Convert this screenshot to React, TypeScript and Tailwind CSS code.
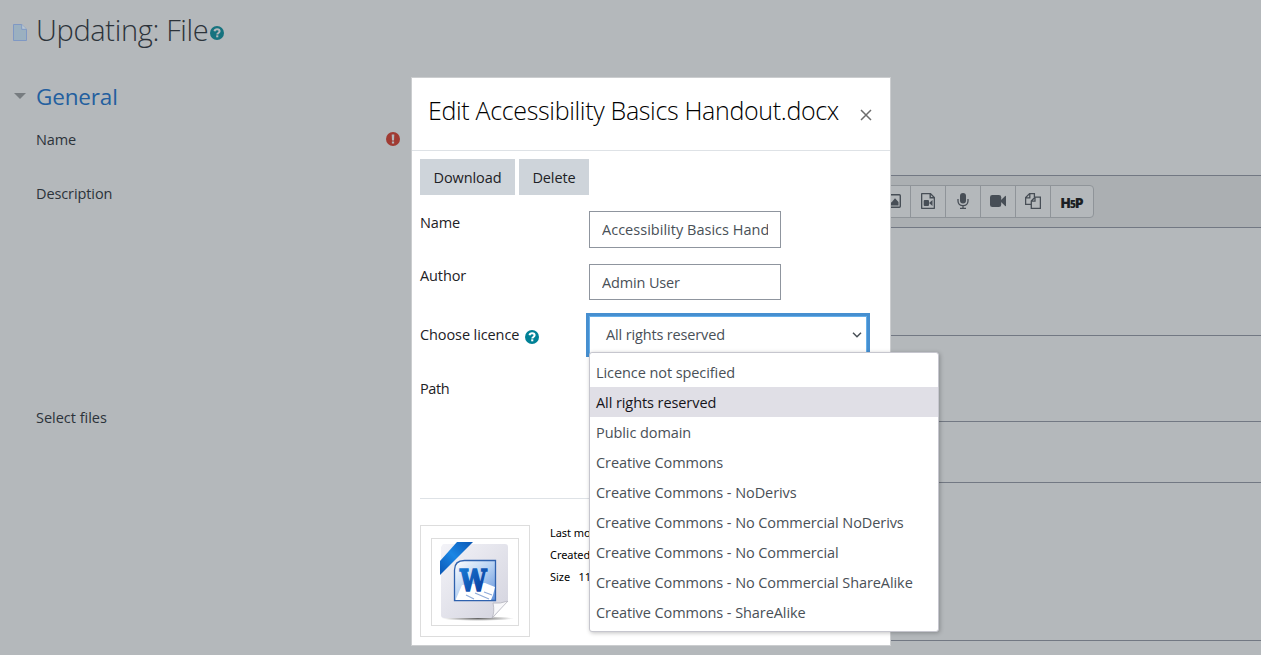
import React, { useState } from 'react';

const LICENCES = [
  'Licence not specified',
  'All rights reserved',
  'Public domain',
  'Creative Commons',
  'Creative Commons - NoDerivs',
  'Creative Commons - No Commercial NoDerivs',
  'Creative Commons - No Commercial',
  'Creative Commons - No Commercial ShareAlike',
  'Creative Commons - ShareAlike',
];

const HelpIcon: React.FC<{ className?: string; mark?: string }> = ({ className, mark = '#fff' }) => (
  <svg viewBox="0 0 14 14" className={className}>
    <circle cx="7" cy="7" r="7" fill="currentColor" />
    <path d="M4.500 5.300C4.800 3.900 5.800 3.300 7.100 3.300c1.400 0 2.500.8 2.500 2 0 1.700-2.300 1.600-2.300 3.200" fill="none" stroke={mark} strokeWidth="2" />
    <rect x="6.200" y="9.300" width="2.100" height="2" fill={mark} />
  </svg>
);

const FileIcon = () => (
  <svg viewBox="0 0 14 17" className="h-[17px] w-[14px]">
    <path d="M.5.5h8.200l4.800 4.800v11.200H.5z" fill="#9bb0c0" stroke="#7f98c4" />
    <path d="M8.700.5v4.800h4.800" fill="#b9c7d2" stroke="#7f98c4" />
  </svg>
);

const ImageIcon = () => (
  <svg viewBox="0 0 16 14" className="h-[14px] w-4" fill="none" stroke="currentColor">
    <rect x=".7" y=".7" width="14.6" height="12.6" rx="1" strokeWidth="1.4" />
    <path d="M2.500 11.500V9.500L5 7l1.500 1.500L10 4.200l3.500 3.800v3.500z" fill="currentColor" stroke="none" />
  </svg>
);

const FileVideoIcon = () => (
  <svg viewBox="0 0 14 16" className="h-4 w-[14px]" fill="none" stroke="currentColor">
    <path d="M.6 1.200q0-.6.6-.6h8.200l4 4v10.200q0 .6-.6.6H1.200q-.6 0-.6-.6zM9.200.6v4.200h4.200" strokeWidth="1.400" />
    <path d="M2.700 8q0-1 1-1h3.300q1 0 1 1v4q0 1-1 1H3.700q-1 0-1-1zM8 10l3.500-3v6z" fill="currentColor" stroke="none" />
  </svg>
);

const MicIcon = () => (
  <svg viewBox="0 0 12 16" className="h-4 w-3" fill="none" stroke="currentColor">
    <rect x="3" y="0" width="6" height="10.5" rx="3" fill="currentColor" stroke="none" />
    <path d="M1 6v2c0 2.800 2.200 4.700 5 4.700s5-1.900 5-4.700V6M6 12.700v2.500M3 15.300h6" strokeWidth="1.300" />
  </svg>
);

const VideoIcon = () => (
  <svg viewBox="0 0 16 12" className="h-3 w-4" fill="currentColor">
    <rect width="11.2" height="12" rx="2.3" />
    <path d="M11 5 15.200.9q.8-.5.8.3v9.600q0 .8-.8.3L11 7z" />
  </svg>
);

const FilesIcon = () => (
  <svg viewBox="0 0 16 16" className="size-4" fill="none" stroke="currentColor" strokeWidth="1.3">
    <path d="M6.200 11.400H.6V4.600l4-4h4.800v3.300M.6 4.800h4.200V.6" />
    <path d="M6.300 8 10 4.200h5.400v11.200H6.300zM6.300 8.200H10v-4" />
  </svg>
);

const WordIcon = () => (
  <svg viewBox="0 0 86 86" className="size-[86px]">
    <defs>
      <linearGradient id="paper" x1="0" y1="0" x2="1" y2="1">
        <stop offset="0" stopColor="#f3f3f8" />
        <stop offset="1" stopColor="#d3d3de" />
      </linearGradient>
      <linearGradient id="ribbon" x1="0" y1="1" x2="1" y2="0">
        <stop offset="0" stopColor="#0a56b4" />
        <stop offset=".5" stopColor="#1a86e4" />
        <stop offset="1" stopColor="#0a56b4" />
      </linearGradient>
      <linearGradient id="tile" x1="0" y1="0" x2="1" y2="1">
        <stop offset="0" stopColor="#ffffff" />
        <stop offset=".5" stopColor="#b8d2f2" />
        <stop offset="1" stopColor="#5f90da" />
      </linearGradient>
      <linearGradient id="letter" x1="0" y1="0" x2="1" y2="1">
        <stop offset="0" stopColor="#1683dc" />
        <stop offset="1" stopColor="#0a2f92" />
      </linearGradient>
      <radialGradient id="shade">
        <stop offset="0" stopColor="#666" />
        <stop offset="1" stopColor="#666" stopOpacity="0" />
      </radialGradient>
    </defs>
    <ellipse cx="46" cy="79.5" rx="36" ry="2.4" fill="url(#shade)" />
    <path d="M11 5h62q3 0 3 3v53L61 79H12q-3 0-3-3V8z" fill="url(#paper)" />
    <path d="M60 79q3-6 1-15 7 1 15-2z" fill="#f8f8fa" stroke="#adadb8" strokeWidth=".7" />
    <path d="M8 22 25 3h16L8 36z" fill="url(#ribbon)" />
    <path d="M22.500 31q0-9.500 10-9.500h31v40h-41z" fill="url(#tile)" stroke="#2f62ae" strokeWidth="1.3" />
    <path d="m30 46 23-2 10 4-2 8-2 5H23.500z" fill="#fff" />
    <path d="m34 56 8 4M43 54l14 6M52 53l8 3" stroke="#8fabd8" strokeWidth="1.2" />
    <text x="28" y="51.500" textLength="26.500" lengthAdjust="spacingAndGlyphs" fill="url(#letter)" stroke="url(#letter)" strokeWidth="1.7" className="font-['DejaVu_Serif',serif] text-[30px] font-bold">W</text>
  </svg>
);

const H5PLogo = () => (
  <span className="flex items-center font-['Open_Sans',sans-serif] text-[14px] font-extrabold leading-none tracking-normal text-[#1b1f23]">
    H<span className="-mx-px mt-0.5 text-[10px]">5</span>P
  </span>
);

const ToolButton: React.FC<{ children: React.ReactNode }> = ({ children }) => (
  <button className="flex w-[35px] items-center justify-center pb-px">{children}</button>
);

const PageBehind = () => (
  <div className="h-full text-[#2c333a]">
    <h1 className="flex h-[62px] items-center pl-[13px] text-[29px] font-light">
      <span className="mt-[3px]"><FileIcon /></span>
      <span className="-mt-0.5 ml-[9px] tracking-[-0.35px]">Updating: File</span>
      <HelpIcon className="ml-0.5 mt-1 size-[14px] text-[#16737f]" mark="#b4b8bb" />
    </h1>
    <div className="flex h-[70px] items-center pl-[14px]">
      <span className="-mt-[3px] border-x-[6px] border-t-[6px] border-x-transparent border-t-[#777c80]" />
      <h3 className="ml-[10px] text-[22.5px] tracking-[-0.15px] text-[#235f9f]">General</h3>
    </div>
    <div className="flex h-[43px] w-[400px] items-start justify-between pl-9">
      <span className="-mt-[3px]">Name</span>
      <svg viewBox="0 0 14 14" className="size-[14px]">
        <circle cx="7" cy="7" r="7" fill="#a03b33" />
        <path d="M5.700 2.500h2.600L8 8.500H6zM5.900 9.500h2.200v2H5.900z" fill="#b4b8bb" />
      </svg>
    </div>
    <div className="flex h-[246px] pl-9">
      <span className="w-[391px] pt-2">Description</span>
      <div className="flex-1">
        <div className="h-[161px] border-y border-[#727883]">
          <div className="flex h-[52px] items-center border-b border-[#727883] bg-[#abafb2] pl-[448px]">
            <div className="flex h-[33px] divide-x divide-[#8f9499] rounded border border-[#8f9499] bg-[#b4b8bb] text-[#474e56]">
              <ToolButton><ImageIcon /></ToolButton>
              <ToolButton><FileVideoIcon /></ToolButton>
              <ToolButton><MicIcon /></ToolButton>
              <ToolButton><VideoIcon /></ToolButton>
              <ToolButton><FilesIcon /></ToolButton>
              <div className="flex w-[42px] items-center justify-center pt-0.5"><H5PLogo /></div>
            </div>
          </div>
        </div>
      </div>
    </div>
    <div className="flex h-[220px] pl-9">
      <span className="-mt-[14px] w-[391px] tracking-[-0.02px]">Select files</span>
      <div className="flex-1 border-y border-[#727883]">
        <div className="h-[61px] border-b border-[#727883]" />
      </div>
    </div>
  </div>
);

export default function App() {
  const [licence, setLicence] = useState('All rights reserved');

  return (
    <div className="relative h-[655px] w-[1261px] overflow-hidden bg-[#b4b8bb] font-['Open_Sans','Noto_Sans',sans-serif] text-[14.5px] leading-[22px] tracking-[-0.1px]">
      <PageBehind />

      <div className="absolute left-[411px] top-[77px] flex h-[569px] w-[480px] flex-col border border-[#cbcdcf] bg-white text-[#1d2125]">
        <div className="flex h-[73px] shrink-0 items-center justify-between border-b border-[#dee2e6] pl-4 pr-[18px]">
          <h2 className="mb-[9px] whitespace-nowrap text-[25px] font-light tracking-[-0.33px] text-black">Edit Accessibility Basics Handout.docx</h2>
          <svg viewBox="0 0 12 12" className="mt-0.5 size-3" stroke="#6c6c6c" strokeWidth="1.5">
            <path d="m1 1 10 10M11 1 1 11" />
          </svg>
        </div>

        <div className="px-2 pt-2">
          <div className="flex gap-1">
            <button className="h-9 w-[95px] bg-[#ced4da] pt-0.5">Download</button>
            <button className="h-9 w-[70px] bg-[#ced4da] pt-0.5">Delete</button>
          </div>
          <div className="mt-4 flex h-[53px] items-start">
            <label className="w-[169px] pt-px">Name</label>
            <input readOnly value="Accessibility Basics Handout.docx" className="h-[37px] w-[192px] border border-[#8f959e] px-3 tracking-[0.02px] text-[#495057]" />
          </div>
          <div className="flex h-[52px] items-start">
            <label className="w-[169px] pt-px">Author</label>
            <input readOnly value="Admin User" className="h-9 w-[192px] border border-[#8f959e] px-3 tracking-[-0.15px] text-[#495057]" />
          </div>
          <div className="flex h-[62px] items-start">
            <label className="flex w-[169px] items-center gap-[6px] pt-2">
              Choose licence
              <HelpIcon className="mt-1 size-[14px] text-[#008196]" />
            </label>
            <div className="flex h-[38px] w-[278px] items-center justify-between border border-[#66afe9] pl-4 pr-1 tracking-[-0.15px] text-[#495057] ring-[3px] ring-[#468fd0]">
              {licence}
              <svg viewBox="0 0 10 6" className="h-[6px] w-[10px]" fill="none" stroke="#495057" strokeWidth="1.5">
                <path d="m1 .8 4 4 4-4" />
              </svg>
            </div>
          </div>
          <div className="flex h-[120px] items-start tracking-[-0.4px]">Path</div>
          <div className="h-[27px] border-t border-[#dee2e6]" />
          <div className="flex text-[11px] text-black">
            <div className="flex h-[112px] w-[110px] items-center justify-center border border-[#dddddd] pt-0.5">
              <div className="flex h-[88px] w-[88px] items-center justify-center border border-[#dddddd]">
                <WordIcon />
              </div>
            </div>
            <div className="-mt-[3px] ml-5 whitespace-nowrap font-['Noto_Sans',sans-serif] tracking-[-0.05px]">
              <p>Last mo</p>
              <p>Created</p>
              <p>Size&nbsp;&nbsp; 11</p>
            </div>
          </div>
        </div>
      </div>

      <ul className="absolute left-[589px] top-[352px] w-[350px] rounded-[3px] border border-[#c6c6ce] bg-white py-1 tracking-[-0.08px] text-[#495057] shadow-[1px_1px_4px_rgba(0,0,0,0.25)]">
        {LICENCES.map(item => (
          <li
            key={item}
            onClick={() => setLicence(item)}
            className={`flex h-[30px] items-center whitespace-nowrap pl-[6px] pt-0.5 ${item === licence ? 'bg-[#e0dfe6] text-[#15141a]' : ''}`}
          >
            {item}
          </li>
        ))}
      </ul>
    </div>
  );
}
